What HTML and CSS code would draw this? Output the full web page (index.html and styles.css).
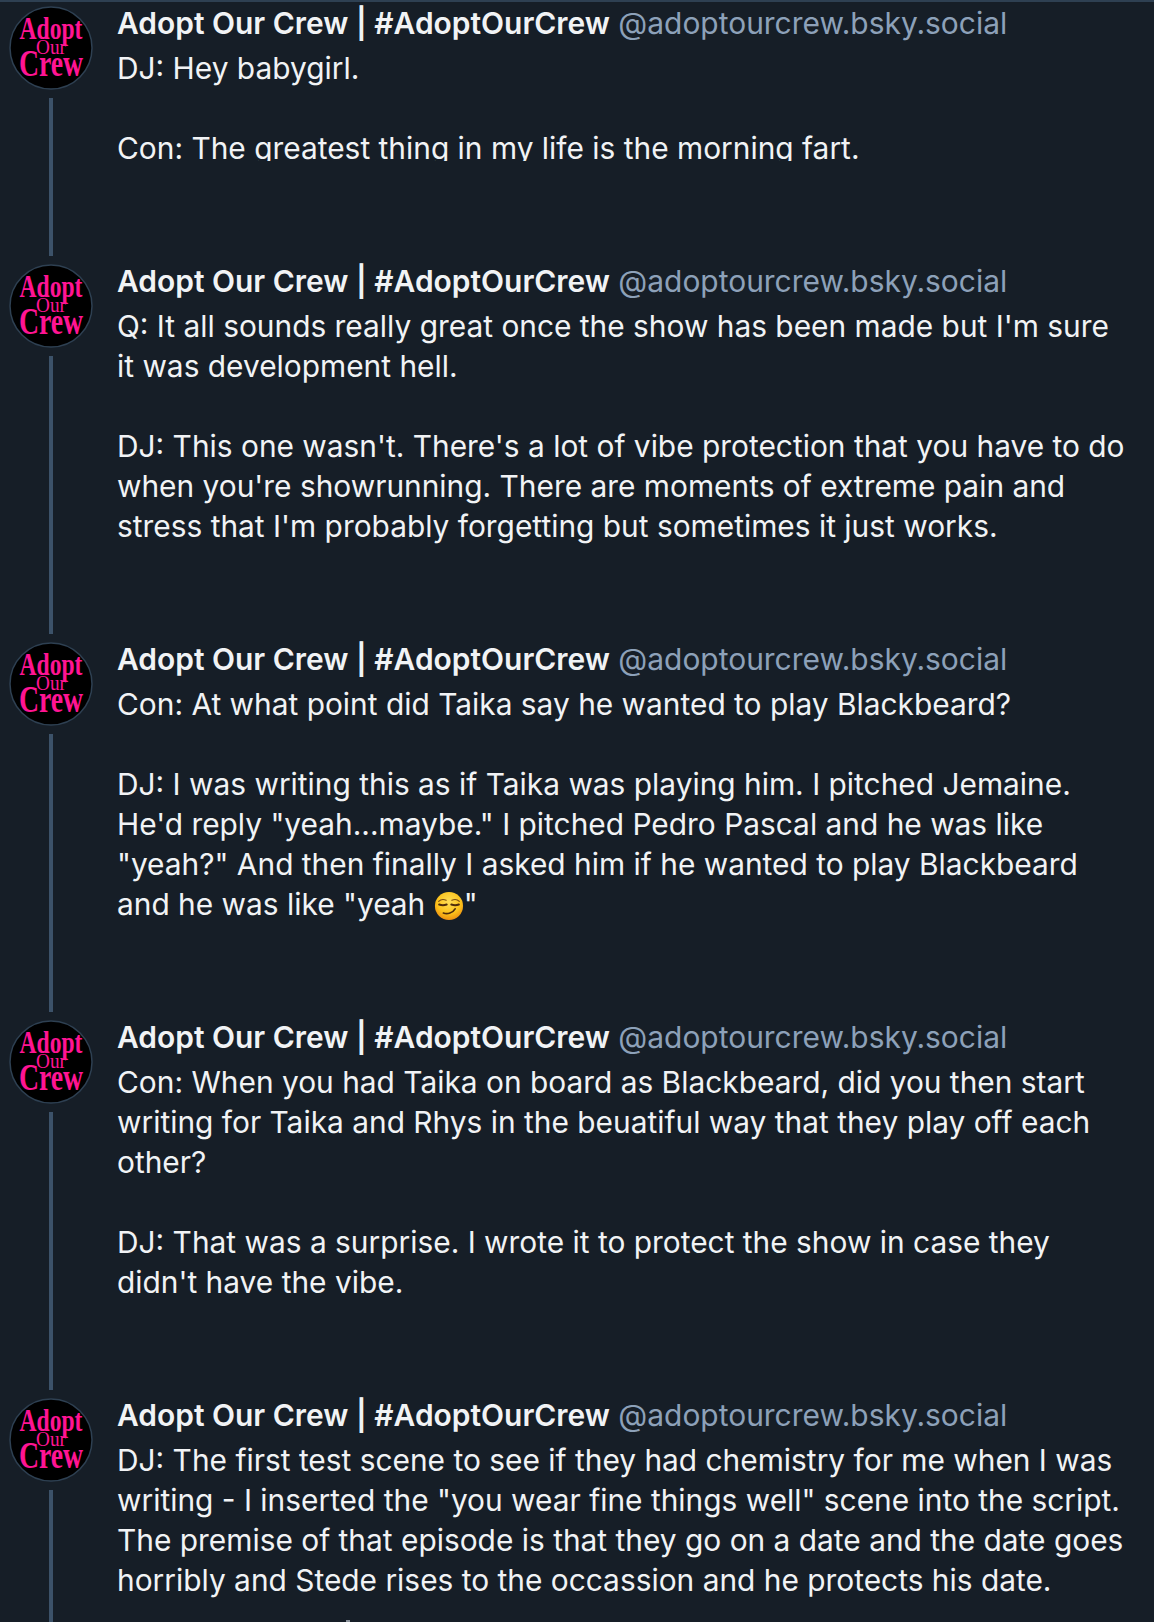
FILE: index.html
```html
<!DOCTYPE html>
<html lang="en">
<head>
<meta charset="utf-8">
<title>Adopt Our Crew thread</title>
<link rel="stylesheet" href="styles.css">
</head>
<body>
<main class="thread">
  <article class="post post-clipped">
    <div class="rail">
      <svg class="avatar" viewBox="0 0 84 84"><circle cx="42" cy="42" r="41" fill="#000" stroke="#2e4052" stroke-width="1.5"/><g class="logo"><text class="l1">Adopt</text><text class="l2">Our</text><text class="l3">Crew</text></g></svg>
      <div class="line"></div>
    </div>
    <div class="content">
      <div class="head"><span class="name">Adopt Our Crew | #AdoptOurCrew</span> <span class="handle">@adoptourcrew.bsky.social</span></div>
      <div class="text clip">DJ: Hey babygirl.

Con: The greatest thing in my life is the morning fart.</div>
    </div>
  </article>
  <article class="post">
    <div class="rail">
      <svg class="avatar" viewBox="0 0 84 84"><circle cx="42" cy="42" r="41" fill="#000" stroke="#2e4052" stroke-width="1.5"/><g class="logo"><text class="l1">Adopt</text><text class="l2">Our</text><text class="l3">Crew</text></g></svg>
      <div class="line"></div>
    </div>
    <div class="content">
      <div class="head"><span class="name">Adopt Our Crew | #AdoptOurCrew</span> <span class="handle">@adoptourcrew.bsky.social</span></div>
      <div class="text">Q: It all sounds really great once the show has been made but I'm sure it was development hell.

DJ: This one wasn't. There's a lot of vibe protection that you have to do when you're showrunning. There are moments of extreme pain and stress that I'm probably forgetting but sometimes it just works.</div>
    </div>
  </article>
  <article class="post">
    <div class="rail">
      <svg class="avatar" viewBox="0 0 84 84"><circle cx="42" cy="42" r="41" fill="#000" stroke="#2e4052" stroke-width="1.5"/><g class="logo"><text class="l1">Adopt</text><text class="l2">Our</text><text class="l3">Crew</text></g></svg>
      <div class="line"></div>
    </div>
    <div class="content">
      <div class="head"><span class="name">Adopt Our Crew | #AdoptOurCrew</span> <span class="handle">@adoptourcrew.bsky.social</span></div>
      <div class="text">Con: At what point did Taika say he wanted to play Blackbeard?

DJ: I was writing this as if Taika was playing him. I pitched Jemaine. He'd reply "yeah...maybe." I pitched Pedro Pascal and he was like "yeah?" And then finally I asked him if he wanted to play Blackbeard and he was like "yeah <svg class="emoji" viewBox="0 0 32 32"><defs><radialGradient id="face" cx="50%" cy="35%" r="65%"><stop offset="0" stop-color="#fede58"/><stop offset="0.65" stop-color="#fcc21b"/><stop offset="1" stop-color="#ed8f10"/></radialGradient></defs><circle cx="16" cy="16" r="15" fill="url(#face)"/><path d="M5 11c2-2 5-2.400 8-1.200M19 9.800c3-1.200 6-.8 8 1.200" fill="none" stroke="#7a4a12" stroke-width="1.200" stroke-linecap="round"/><path d="M5.500 14.500c2.500.9 5.500.9 8 0M18.500 14.500c2.500.9 5.500.9 8 0" fill="none" stroke="#4e2c0c" stroke-width="2.200" stroke-linecap="round"/><path d="M10 23.500c4.500 1.500 10 0 12.500-4.500" fill="none" stroke="#4e2c0c" stroke-width="1.800" stroke-linecap="round"/></svg>"</div>
    </div>
  </article>
  <article class="post">
    <div class="rail">
      <svg class="avatar" viewBox="0 0 84 84"><circle cx="42" cy="42" r="41" fill="#000" stroke="#2e4052" stroke-width="1.5"/><g class="logo"><text class="l1">Adopt</text><text class="l2">Our</text><text class="l3">Crew</text></g></svg>
      <div class="line"></div>
    </div>
    <div class="content">
      <div class="head"><span class="name">Adopt Our Crew | #AdoptOurCrew</span> <span class="handle">@adoptourcrew.bsky.social</span></div>
      <div class="text">Con: When you had Taika on board as Blackbeard, did you then start writing for Taika and Rhys in the beuatiful way that they play off each other?

DJ: That was a surprise. I wrote it to protect the show in case they didn't have the vibe.</div>
    </div>
  </article>
  <article class="post">
    <div class="rail">
      <svg class="avatar" viewBox="0 0 84 84"><circle cx="42" cy="42" r="41" fill="#000" stroke="#2e4052" stroke-width="1.5"/><g class="logo"><text class="l1">Adopt</text><text class="l2">Our</text><text class="l3">Crew</text></g></svg>
      <div class="line"></div>
    </div>
    <div class="content">
      <div class="head"><span class="name">Adopt Our Crew | #AdoptOurCrew</span> <span class="handle">@adoptourcrew.bsky.social</span></div>
      <div class="text">DJ: The first test scene to see if they had chemistry for me when I was writing - I inserted the "you wear fine things well" scene into the script. The premise of that episode is that they go on a date and the date goes horribly and Stede rises to the occassion and he protects his date.</div>
    </div>
  </article>
</main>
<div class="next-tick"></div>
</body>
</html>
```
FILE: styles.css
```css
html, body {
  margin: 0;
  height: 100%;
  overflow: hidden;
  background: #161e27;
}
body {
  position: relative;
}
.thread {
  border-top: 2px solid #2e4052;
  font-family: Inter, "Noto Sans", sans-serif;
  color: #f1f3f5;
}
.post {
  display: flex;
  gap: 21px;
  height: 378px;
  padding-left: 9px;
  padding-right: 24px;
  box-sizing: border-box;
}
.post-clipped {
  height: 256px;
}
.rail {
  width: 87px;
  flex: none;
  display: flex;
  flex-direction: column;
  padding-top: 6px;
}
.post-clipped .rail {
  padding-top: 4px;
}
.avatar {
  width: 84px;
  height: 84px;
  flex: none;
}
.logo text {
  font-family: "Liberation Serif", serif;
  font-weight: 700;
  fill: #ff1493;
  text-anchor: middle;
}
.logo .l1 {
  font-size: 31px;
  transform: translate(42px, 33px) scaleX(0.76);
}
.logo .l2 {
  font-size: 20px;
  font-weight: 400;
  transform: translate(42px, 48px) scaleX(0.96);
}
.logo .l3 {
  font-size: 38px;
  transform: translate(42px, 70px) scaleX(0.73);
}
.line {
  width: 4px;
  flex: 1;
  margin: 8px 0 2px 40px;
  background: #3c5269;
}
.content {
  flex: 1;
  min-width: 0;
  padding-top: 3px;
}
.post-clipped .content {
  padding-top: 1px;
}
.head {
  font-size: 29.95px;
  line-height: 40px;
  white-space: nowrap;
}
.name {
  font-weight: 600;
}
.handle {
  color: #8da1b9;
  font-weight: 400;
}
.text {
  font-size: 29.88px;
  line-height: 40px;
  white-space: pre-wrap;
  margin-top: 5px;
}
.clip {
  height: 113px;
  overflow: hidden;
}
.emoji {
  width: 30px;
  height: 30px;
  vertical-align: -6px;
}
.next-tick {
  position: absolute;
  left: 346px;
  bottom: 0;
  width: 4px;
  height: 2px;
  background: #8b939c;
}
```
